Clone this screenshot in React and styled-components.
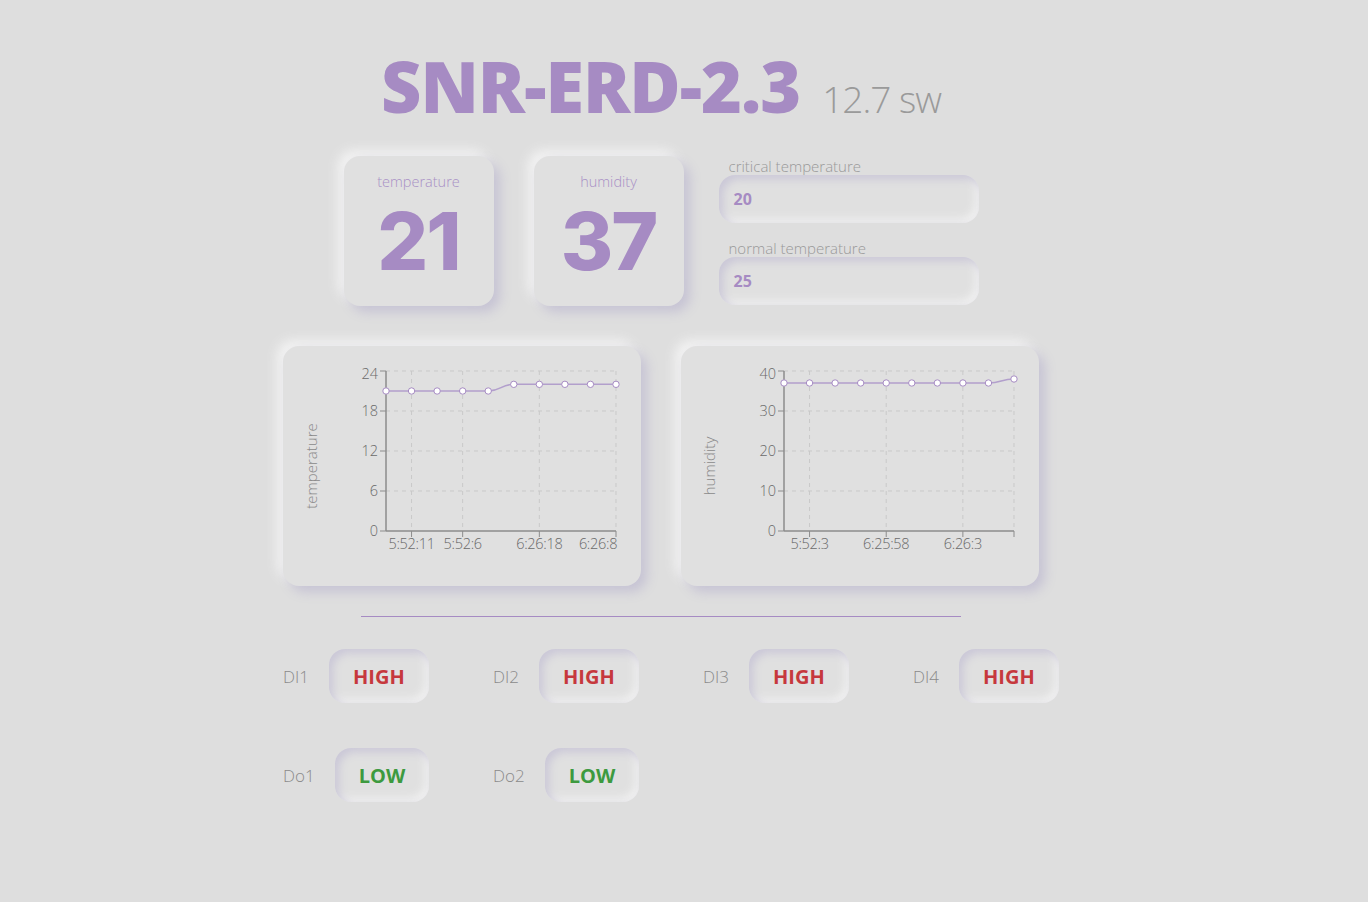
import React from 'react'
import styled, { createGlobalStyle } from 'styled-components'

const purple = '#a68bc3'

const GlobalStyle = createGlobalStyle`
  body {
    margin: 0;
    background: #dedede;
    font-family: 'Open Sans', 'Noto Sans', sans-serif;
  }
`

const tempData = [21, 21, 21, 21, 21, 22, 22, 22, 22, 22]
const humData = [37, 37, 37, 37, 37, 37, 37, 37, 37, 38]

const inputs = [
  { label: 'DI1', value: 'HIGH' },
  { label: 'DI2', value: 'HIGH' },
  { label: 'DI3', value: 'HIGH' },
  { label: 'DI4', value: 'HIGH' },
]

const outputs = [
  { label: 'Do1', value: 'LOW' },
  { label: 'Do2', value: 'LOW' },
]

const Chart = ({ data, max, yTicks, xTicks, lastTickOnly, name }) => {
  const left = 103
  const right = 333
  const top = 25
  const bottom = 185
  const step = (right - left) / (data.length - 1)
  const y = v => bottom - (v / max) * (bottom - top)
  const pts = data.map((v, i) => [left + i * step, y(v)])
  let d = `M${pts[0][0]},${pts[0][1]}`
  for (let i = 1; i < pts.length; i++) {
    const [x0, y0] = pts[i - 1]
    const [x1, y1] = pts[i]
    const mx = (x0 + x1) / 2
    d += ` C${mx},${y0} ${mx},${y1} ${x1},${y1}`
  }
  const gridX = xTicks.map(t => left + t.i * step)
  if (lastTickOnly) gridX.push(right)

  return (
    <svg width="358" height="240">
      <text
        x="34"
        y="120"
        transform="rotate(-90 34 120)"
        textAnchor="middle"
        fontSize="15"
        fill="#8a8a8a"
        fontFamily="'Open Sans', sans-serif"
        fontWeight="300"
      >
        {name}
      </text>
      {yTicks.slice(1).map(t => (
        <line key={t} x1={left} x2={right} y1={y(t)} y2={y(t)} stroke="#c9c9c9" strokeDasharray="4 4" />
      ))}
      {gridX.map(x => (
        <line key={x} x1={x} x2={x} y1={top} y2={bottom} stroke="#c9c9c9" strokeDasharray="4 4" />
      ))}
      <line x1={left} x2={left} y1={top} y2={bottom} stroke="#8c8c8c" strokeWidth="1.5" />
      <line x1={left} x2={right} y1={bottom} y2={bottom} stroke="#8c8c8c" strokeWidth="1.5" />
      {yTicks.map((t, i) => (
        <g key={t}>
          <line x1={left - 6} x2={left} y1={y(t)} y2={y(t)} stroke="#8c8c8c" />
          <text
            x={left - 8}
            y={y(t) + 5 + (i === yTicks.length - 1 ? 3 : 0)}
            textAnchor="end"
            fontSize="14.5"
            fill="#6a6a6a"
            fontFamily="'Open Sans', sans-serif"
            fontWeight="300"
          >
            {t}
          </text>
        </g>
      ))}
      {gridX.map(x => (
        <line key={'t' + x} x1={x} x2={x} y1={bottom} y2={bottom + 6} stroke="#8c8c8c" />
      ))}
      {xTicks.map(t => (
        <text
          key={t.label}
          x={left + t.i * step + (t.dx || 0)}
          y={bottom + 18}
          textAnchor="middle"
          fontSize="14.5"
          fill="#6a6a6a"
          fontFamily="'Open Sans', sans-serif"
          fontWeight="300"
          letterSpacing="-0.3"
        >
          {t.label}
        </text>
      ))}
      <path d={d} fill="none" stroke="#b29fcc" strokeWidth="1.5" />
      {pts.map(([px, py], i) => (
        <circle key={i} cx={px} cy={py} r="3.2" fill="#fff" stroke="#a68bc3" strokeWidth="1" />
      ))}
    </svg>
  )
}

const App = () => (
  <>
    <GlobalStyle />
    <Main>
      <Header>
        <Title>SNR-ERD-2.3</Title>
        <Version>12.7 sw</Version>
      </Header>

      <TopRow>
        <ValueCard>
          <CardLabel>temperature</CardLabel>
          <BigNumber>21</BigNumber>
        </ValueCard>
        <ValueCard>
          <CardLabel>humidity</CardLabel>
          <BigNumber>37</BigNumber>
        </ValueCard>
        <Settings>
          <FieldLabel>critical temperature</FieldLabel>
          <Field>20</Field>
          <FieldLabel $spaced>normal temperature</FieldLabel>
          <Field>25</Field>
        </Settings>
      </TopRow>

      <ChartRow>
        <ChartCard>
          <Chart
            name="temperature"
            data={tempData}
            max={24}
            yTicks={[0, 6, 12, 18, 24]}
            xTicks={[
              { i: 1, label: '5:52:11' },
              { i: 3, label: '5:52:6' },
              { i: 6, label: '6:26:18' },
              { i: 9, label: '6:26:8', dx: -18 },
            ]}
          />
        </ChartCard>
        <ChartCard>
          <Chart
            name="humidity"
            data={humData}
            max={40}
            yTicks={[0, 10, 20, 30, 40]}
            xTicks={[
              { i: 1, label: '5:52:3' },
              { i: 4, label: '6:25:58' },
              { i: 7, label: '6:26:3' },
            ]}
            lastTickOnly
          />
        </ChartCard>
      </ChartRow>

      <Divider />

      <IoGrid>
        {inputs.map(io => (
          <IoItem key={io.label}>
            <IoLabel>{io.label}</IoLabel>
            <IoState $high>{io.value}</IoState>
          </IoItem>
        ))}
      </IoGrid>
      <IoGrid $second>
        {outputs.map(io => (
          <IoItem key={io.label}>
            <IoLabel>{io.label}</IoLabel>
            <IoState>{io.value}</IoState>
          </IoItem>
        ))}
      </IoGrid>
    </Main>
  </>
)

export default App

const Main = styled.div`
  width: 1322px;
  min-height: 902px;
  display: flex;
  flex-direction: column;
  align-items: center;
`

const Header = styled.div`
  display: flex;
  align-items: baseline;
  gap: 22px;
  margin-top: 46px;
  height: 80px;
`

const Title = styled.h1`
  margin: 0;
  font-size: 70px;
  font-weight: 800;
  color: ${purple};
  letter-spacing: -1px;
  line-height: 80px;
`

const Version = styled.span`
  font-size: 37px;
  font-weight: 300;
  color: #9a9a9a;
  letter-spacing: -1px;
`

const TopRow = styled.div`
  display: flex;
  align-items: flex-start;
  margin-top: 30px;
`

const ValueCard = styled.div`
  width: 150px;
  height: 150px;
  border-radius: 16px;
  background: #e0e0e0;
  box-shadow: 6px 6px 12px #c6c3d4, -6px -6px 12px #f3f3f3;
  display: flex;
  flex-direction: column;
  align-items: center;
  margin-right: 40px;

  & + & {
    margin-right: 35px;
  }
`

const CardLabel = styled.div`
  margin-top: 16px;
  font-size: 14.5px;
  line-height: 20px;
  font-weight: 300;
  color: #a990c6;
`

const BigNumber = styled.div`
  margin-top: 9px;
  font-family: Inter, 'Open Sans', sans-serif;
  font-size: 80px;
  font-weight: 800;
  line-height: 80px;
  color: ${purple};
  letter-spacing: -2px;
`

const Settings = styled.div`
  display: flex;
  flex-direction: column;
  margin-top: 2px;
`

const FieldLabel = styled.div`
  margin-left: 10px;
  margin-top: ${p => (p.$spaced ? '17px' : '0')};
  font-size: 15px;
  line-height: 17px;
  font-weight: 300;
  color: #999;
`

const Field = styled.div`
  width: 260px;
  height: 48px;
  box-sizing: border-box;
  border-radius: 16px;
  padding: 0 15px;
  display: flex;
  align-items: center;
  background: #e0e0e0;
  box-shadow: inset 4px 4px 8px #cac7d7, inset -4px -4px 8px #f1f1f1;
  color: ${purple};
  font-size: 16px;
  font-weight: 700;
`

const ChartRow = styled.div`
  display: flex;
  gap: 40px;
  margin-top: 40px;
`

const ChartCard = styled.div`
  width: 358px;
  height: 240px;
  border-radius: 16px;
  background: #e0e0e0;
  box-shadow: 6px 6px 12px #c6c3d4, -6px -6px 12px #f3f3f3;
  display: flex;
`

const Divider = styled.div`
  width: 600px;
  height: 1px;
  background: ${purple};
  margin-top: 30px;
`

const IoGrid = styled.div`
  margin-left: 283px;
  align-self: flex-start;
  display: grid;
  grid-template-columns: repeat(4, 210px);
  margin-top: ${p => (p.$second ? '45px' : '32px')};
`

const IoItem = styled.div`
  display: flex;
  align-items: center;
  gap: 20px;
`

const IoLabel = styled.span`
  font-size: 17px;
  font-weight: 300;
  color: #8a8a8a;
`

const IoState = styled.div`
  height: 54px;
  padding: 0 24px;
  border-radius: 16px;
  display: flex;
  align-items: center;
  background: #e0e0e0;
  box-shadow: inset 4px 4px 8px #cac7d7, inset -4px -4px 8px #f1f1f1;
  font-size: 20px;
  font-weight: 700;
  color: ${p => (p.$high ? '#c6383d' : '#3d9a3f')};
`
